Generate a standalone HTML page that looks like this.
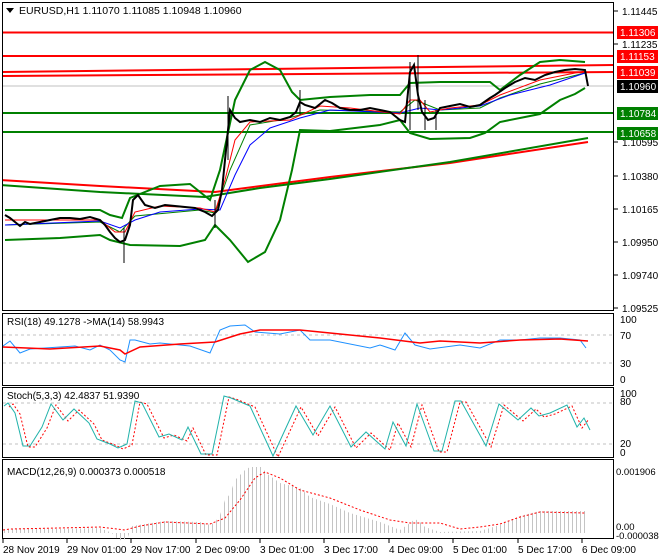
<!DOCTYPE html>
<html><head><meta charset="utf-8"><style>
html,body{margin:0;padding:0;background:#fff;}
svg{display:block;font-family:"Liberation Sans",sans-serif;font-size:10px;}
</style></head><body>
<svg width="660" height="560" viewBox="0 0 660 560" xmlns="http://www.w3.org/2000/svg">
<defs>
<pattern id="hb" width="4" height="2" patternUnits="userSpaceOnUse"><rect x="0" y="0" width="1" height="2" fill="#c4c4c4"/></pattern>
<clipPath id="cm"><rect x="2" y="2" width="612" height="309"/></clipPath>
</defs>
<rect width="660" height="560" fill="#fff"/>
<g clip-path="url(#cm)">
<line x1="0" y1="86" x2="614" y2="86" stroke="#c0c0c0" stroke-width="1"/>
<line x1="0" y1="32.5" x2="614" y2="32.5" stroke="#ff0000" stroke-width="2"/>
<line x1="0" y1="56" x2="614" y2="56" stroke="#ff0000" stroke-width="2"/>
<line x1="0" y1="72" x2="614" y2="65" stroke="#ff0000" stroke-width="2"/>
<line x1="0" y1="76" x2="614" y2="72" stroke="#ff0000" stroke-width="2"/>
<line x1="0" y1="113" x2="614" y2="113" stroke="#008000" stroke-width="2"/>
<line x1="0" y1="132" x2="614" y2="132" stroke="#008000" stroke-width="2"/>
<polyline fill="none" stroke="#ff0000" stroke-width="2" points="0,180 100,186 215,192 330,177 450,163 588,142"/>
<polyline fill="none" stroke="#008000" stroke-width="2" points="0,185 100,192 205,197 260,188 330,179 450,162 588,138"/>
<polyline fill="none" stroke="#008000" stroke-width="2" points="5,210 100,210 110,215 122,218 130,198 160,186 190,184 210,200 220,170 235,100 250,70 265,62 280,70 292,92 300,100 330,97 370,95 400,95 410,83 440,82 480,82 490,82 500,90 520,75 540,62 560,60 585,62"/>
<polyline fill="none" stroke="#008000" stroke-width="2" points="5,240 60,238 100,235 110,240 130,245 180,246 205,240 215,225 230,240 248,262 265,252 280,220 292,170 300,130 330,131 380,125 400,120 410,133 430,139 470,138 485,133 500,122 540,114 560,100 575,94 585,88"/>
<polyline fill="none" stroke="#008000" stroke-width="1" points="5,225 100,222 120,232 135,216 200,210 215,213 230,170 250,125 280,120 320,110 400,112 415,100 440,110 480,108 500,98 540,84 585,73"/>
<polyline fill="none" stroke="#0000ff" stroke-width="1" points="5,225 100,221 120,228 135,220 160,212 200,209 220,210 235,175 250,145 270,128 300,118 330,110 400,113 420,108 440,110 480,106 510,95 550,85 585,73"/>
<polyline fill="none" stroke="#ff0000" stroke-width="1" points="5,220 50,220 100,220 115,232 125,232 135,212 160,206 200,208 215,212 225,180 235,140 250,122 290,120 320,106 350,108 400,114 410,100 420,100 430,112 450,108 480,105 500,95 540,80 585,71"/>
<polyline fill="none" stroke="#000" stroke-width="2" points="5,215 10,218 15,222 20,226 25,222 30,224 40,222 50,220 60,218 70,218 80,219 90,217 100,220 105,225 110,232 115,238 120,242 125,240 130,225 133,200 138,195 145,205 155,208 165,205 175,206 185,207 195,208 205,212 212,216 218,210 222,190 226,150 230,110 235,118 240,122 250,120 260,122 270,118 280,120 290,117 296,112 300,102 305,105 315,108 325,100 332,103 340,108 350,110 360,110 370,108 380,110 390,112 400,120 405,122 410,72 414,65 418,95 422,112 428,120 434,118 440,108 450,106 460,104 470,107 480,105 490,98 495,95 505,88 515,82 525,78 535,80 545,75 555,72 565,70 575,69 585,70 588,86"/>
<g stroke="#000" stroke-width="1">
<line x1="124" y1="228" x2="124" y2="263"/><line x1="228" y1="96" x2="228" y2="160"/><line x1="410" y1="62" x2="410" y2="130"/><line x1="418" y1="55" x2="418" y2="110"/><line x1="425" y1="100" x2="425" y2="130"/><line x1="436" y1="110" x2="436" y2="130"/><line x1="215" y1="200" x2="215" y2="228"/><line x1="300" y1="90" x2="300" y2="115"/>
</g>
</g>
<g fill="none" stroke="#000" stroke-width="1">
<rect x="2.5" y="2.5" width="611" height="308"/>
<rect x="2.5" y="313.5" width="611" height="72"/>
<rect x="2.5" y="387.5" width="611" height="70"/>
<rect x="2.5" y="459.5" width="611" height="79"/>
</g>
<polygon points="6,8 14,8 10,13" fill="#000"/>
<text x="19" y="14" font-size="10.5">EURUSD,H1  1.11070 1.11085 1.10948 1.10960</text>
<g font-size="10" fill="#000">
<text x="622" y="15">1.11445</text>
<text x="622" y="48">1.11235</text>
<text x="622" y="146">1.10595</text>
<text x="622" y="180">1.10380</text>
<text x="622" y="213">1.10165</text>
<text x="622" y="246">1.09950</text>
<text x="622" y="279">1.09740</text>
<text x="622" y="312">1.09525</text>
</g>
<g stroke="#000"><line x1="614" y1="11" x2="618" y2="11"/><line x1="614" y1="44" x2="618" y2="44"/><line x1="614" y1="142" x2="618" y2="142"/><line x1="614" y1="176" x2="618" y2="176"/><line x1="614" y1="209" x2="618" y2="209"/><line x1="614" y1="242" x2="618" y2="242"/><line x1="614" y1="275" x2="618" y2="275"/><line x1="614" y1="308" x2="618" y2="308"/></g>
<rect x="617" y="26" width="41" height="13" fill="#ff0000"/><text x="620" y="36" fill="#fff">1.11306</text>
<rect x="617" y="50" width="41" height="13" fill="#ff0000"/><text x="620" y="60" fill="#fff">1.11153</text>
<rect x="617" y="66" width="41" height="13" fill="#ff0000"/><text x="620" y="76" fill="#fff">1.11039</text>
<rect x="617" y="80" width="41" height="13" fill="#000"/><text x="620" y="90" fill="#fff">1.10960</text>
<rect x="617" y="107" width="41" height="13" fill="#008000"/><text x="620" y="117" fill="#fff">1.10784</text>
<rect x="617" y="127" width="41" height="13" fill="#008000"/><text x="620" y="137" fill="#fff">1.10658</text>
<line x1="3" y1="335" x2="613" y2="335" stroke="#c0c0c0" stroke-dasharray="3,3"/>
<line x1="3" y1="363" x2="613" y2="363" stroke="#c0c0c0" stroke-dasharray="3,3"/>
<polyline fill="none" stroke="#1e90ff" stroke-width="1" points="3,346 10,341 20,353 30,349 45,348 60,347 75,346 90,350 100,345 110,350 120,360 125,362 130,340 135,340 150,344 160,343 190,346 210,353 220,330 230,326 245,325 255,332 280,334 300,330 310,340 330,340 370,348 380,345 395,350 405,333 415,345 430,349 460,345 480,348 500,340 520,340 540,338 560,338 580,340 586,348"/>
<polyline fill="none" stroke="#ff0000" stroke-width="1.5" points="3,347 50,349 100,346 120,350 125,354 140,347 180,344 215,342 240,334 260,330 300,330 330,333 380,338 420,343 440,341 480,343 520,340 560,339 588,341"/>
<text x="7" y="325">RSI(18) 49.1278  -&gt;MA(14) 58.9943</text>
<text x="620" y="323">100</text><text x="620" y="339">70</text><text x="620" y="367">30</text><text x="620" y="383">0</text>
<line x1="3" y1="403" x2="613" y2="403" stroke="#c0c0c0" stroke-dasharray="3,3"/>
<line x1="3" y1="444" x2="613" y2="444" stroke="#c0c0c0" stroke-dasharray="3,3"/>
<polyline fill="none" stroke="#ff0000" stroke-width="1" stroke-dasharray="2,2" transform="translate(5,1)" points="4,406 8,403 15,413 23,446 30,446 42,427 51,404 63,420 74,409 89,423 97,439 110,444 118,448 127,444 135,401 142,403 159,437 169,434 182,440 188,427 201,454 212,454 224,396 231,398 250,406 273,456 296,406 313,435 330,406 351,447 366,432 385,449 393,422 406,446 417,404 434,451 442,451 455,401 461,401 486,446 499,404 518,420 531,408 539,416 550,413 567,405 577,427 584,418"/>
<polyline fill="none" stroke="#20b2aa" stroke-width="1" points="4,406 8,403 15,413 23,446 30,446 42,427 51,404 63,420 74,409 89,423 97,439 110,444 118,448 127,444 135,401 142,403 159,437 169,434 182,440 188,427 201,454 212,454 224,396 231,398 250,406 273,456 296,406 313,435 330,406 351,447 366,432 385,449 393,422 406,446 417,404 434,451 442,451 455,401 461,401 486,446 499,404 518,420 531,408 539,416 550,413 567,405 577,427 584,418 590,430"/>
<text x="7" y="399">Stoch(5,3,3) 42.4837 51.9390</text>
<text x="620" y="397">100</text><text x="620" y="405">80</text><text x="620" y="447">20</text><text x="620" y="456">0</text>
<polygon fill="url(#hb)" points="4,533 4,529 60,529 100,528 112,533 115,537 122,541 128,537 132,526 165,521 200,522 210,525 215,522 220,515 225,500 230,494 235,480 240,475 245,470 250,467 262,467 266,473 280,483 300,488 310,497 330,504 350,513 380,522 400,530 410,523 415,519 420,522 425,527 440,532 480,531 500,525 520,516 540,511 585,511 588,520 588,533"/>
<polyline fill="none" stroke="#ff0000" stroke-width="1" stroke-dasharray="2,2" points="3,530 10,529 60,528 100,527 125,530 140,526 165,522 210,524 225,518 240,500 255,478 265,472 280,478 300,490 330,498 360,510 390,520 410,523 440,523 460,529 480,527 500,524 520,517 540,512 585,513"/>
<text x="7" y="475">MACD(12,26,9) 0.000373 0.000518</text>
<text x="616" y="475" font-size="9.5">0.001906</text>
<text x="616" y="530" font-size="9.5">0.00</text>
<text x="616" y="539" font-size="9.5">-0.000038</text>
<g stroke="#000"><line x1="3" y1="539" x2="3" y2="543"/><line x1="67" y1="539" x2="67" y2="543"/><line x1="131" y1="539" x2="131" y2="543"/><line x1="196" y1="539" x2="196" y2="543"/><line x1="260" y1="539" x2="260" y2="543"/><line x1="324" y1="539" x2="324" y2="543"/><line x1="389" y1="539" x2="389" y2="543"/><line x1="453" y1="539" x2="453" y2="543"/><line x1="518" y1="539" x2="518" y2="543"/><line x1="582" y1="539" x2="582" y2="543"/></g>
<g font-size="10">
<text x="3" y="553">28 Nov 2019</text>
<text x="67" y="553">29 Nov 01:00</text>
<text x="131" y="553">29 Nov 17:00</text>
<text x="196" y="553">2 Dec 09:00</text>
<text x="260" y="553">3 Dec 01:00</text>
<text x="324" y="553">3 Dec 17:00</text>
<text x="389" y="553">4 Dec 09:00</text>
<text x="453" y="553">5 Dec 01:00</text>
<text x="518" y="553">5 Dec 17:00</text>
<text x="582" y="553">6 Dec 09:00</text>
</g>
</svg>
</body></html>
